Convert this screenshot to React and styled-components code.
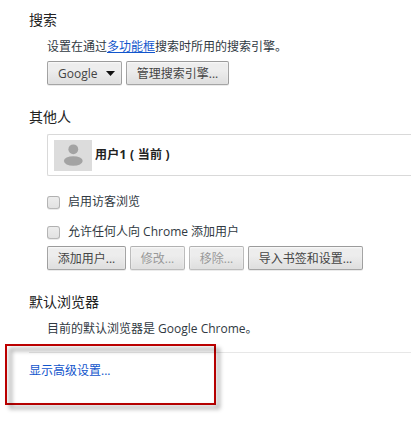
import React from 'react'
import styled, { createGlobalStyle } from 'styled-components'

const GlobalStyle = createGlobalStyle`
    html, body {
        margin: 0;
        padding: 0;
        background: #fff;
        overflow: hidden;
    }
    body {
        font-family: "Open Sans", "Noto Sans CJK SC", sans-serif;
    }
`

const App = () => {
    return (
        <Page>
            <GlobalStyle />
            <Section>
                <Heading>搜索</Heading>
                <Body $top={11}>
                    <Text>设置在通过<InlineLink>多功能框</InlineLink>搜索时所用的搜索引擎。</Text>
                    <ButtonRow $top={6}>
                        <Button $select $width={75}>
                            Google
                            <Caret viewBox="0 0 9 5"><path d="M0 0h9L4.5 5z" /></Caret>
                        </Button>
                        <Button $width={103}>管理搜索引擎...</Button>
                    </ButtonRow>
                </Body>
            </Section>
            <Section $top={23}>
                <Heading>其他人</Heading>
                <Body $top={9}>
                    <UserList>
                        <Avatar>
                            <svg width="38" height="31" viewBox="0 0 38 31">
                                <circle cx="19.3" cy="9.3" r="4.9" fill="#a3a3a3" />
                                <ellipse cx="19.3" cy="21" rx="9.4" ry="4.8" fill="#a3a3a3" />
                            </svg>
                        </Avatar>
                        <UserName>用户1 ( 当前 )</UserName>
                    </UserList>
                    <CheckRow $top={18}>
                        <Checkbox />
                        <Text>启用访客浏览</Text>
                    </CheckRow>
                    <CheckRow $top={14}>
                        <Checkbox />
                        <Text>允许任何人向 Chrome 添加用户</Text>
                    </CheckRow>
                    <ButtonRow $top={6}>
                        <Button $width={79}>添加用户...</Button>
                        <Button $width={55} disabled>修改...</Button>
                        <Button $width={55} disabled>移除...</Button>
                        <Button $width={115}>导入书签和设置...</Button>
                    </ButtonRow>
                </Body>
            </Section>
            <Section $top={23}>
                <Heading>默认浏览器</Heading>
                <Body $top={11}>
                    <Text>目前的默认浏览器是 Google Chrome。</Text>
                </Body>
            </Section>
            <Footer>
                <FooterLink>显示高级设置...</FooterLink>
            </Footer>
            <Highlight />
        </Page>
    )
}

const Page = styled.div`
    position: relative;
    width: 411px;
    height: 421px;
    padding-top: 11px;
    box-sizing: border-box;
    overflow: hidden;
    background: #fff;
    color: #303942;
`

const Section = styled.section`
    margin-top: ${props => props.$top || 0}px;
    padding-left: 29px;
`

const Heading = styled.h3`
    margin: 0;
    height: 17px;
    font-size: 14px;
    font-weight: 400;
    line-height: 17px;
    color: #222;
`

const Body = styled.div`
    margin-top: ${props => props.$top}px;
    padding-left: 18px;
`

const Text = styled.div`
    height: 16px;
    font-size: 12px;
    line-height: 16px;
    color: #303942;
    white-space: nowrap;
`

const InlineLink = styled.span`
    color: #15c;
    text-decoration: underline;
`

const ButtonRow = styled.div`
    display: flex;
    gap: 4px;
    margin-top: ${props => props.$top}px;
`

const Button = styled.button`
    display: flex;
    align-items: center;
    justify-content: ${props => props.$select ? 'space-between' : 'center'};
    width: ${props => props.$width}px;
    height: 24px;
    margin: 0;
    padding: ${props => props.$select ? '0 6px 0 10px' : '0'};
    box-sizing: border-box;
    border: 1px solid ${props => props.disabled ? 'rgba(0, 0, 0, .2)' : 'rgba(0, 0, 0, .3)'};
    border-radius: 2px;
    background: linear-gradient(#ededed, #ededed 38%, #dedede);
    box-shadow: 0 1px 0 rgba(0, 0, 0, .08), inset 0 1px 2px rgba(255, 255, 255, .75);
    color: ${props => props.disabled ? '#999' : '#444'};
    font-family: inherit;
    font-size: 12px;
    white-space: nowrap;
`

const Caret = styled.svg`
    width: 9px;
    height: 5px;
    fill: #111;
`

const UserList = styled.div`
    display: flex;
    align-items: center;
    gap: 3px;
    height: 42px;
    padding-left: 6px;
    box-sizing: border-box;
    border: 1px solid #d9d9d9;
    border-right: 0;
    border-radius: 2px 0 0 2px;
`

const Avatar = styled.div`
    width: 38px;
    height: 31px;
    background: #dcdcdc;
`

const UserName = styled.div`
    margin-top: -2px;
    font-size: 12px;
    font-weight: 700;
    letter-spacing: .25px;
    color: #222;
    white-space: pre;
`

const CheckRow = styled.div`
    display: flex;
    align-items: center;
    gap: 8px;
    margin-top: ${props => props.$top}px;
`

const Checkbox = styled.span`
    width: 13px;
    height: 13px;
    box-sizing: border-box;
    border: 1px solid rgba(0, 0, 0, .22);
    border-radius: 3px;
    background: linear-gradient(#ededed, #e2e2e2);
    box-shadow: 0 1px 0 rgba(0, 0, 0, .08);
`

const Footer = styled.div`
    margin: 15px 0 0 29px;
    padding-top: 8px;
    border-top: 1px solid #e7e7e7;
    line-height: 16px;
`

const FooterLink = styled.span`
    font-size: 12px;
    color: #15c;
`

const Highlight = styled.div`
    position: absolute;
    left: 5px;
    top: 344px;
    width: 211px;
    height: 61px;
    box-sizing: border-box;
    border: 2px solid #c00000;

    &::before {
        content: '';
        position: absolute;
        inset: -2px;
        border: 3px solid rgba(0, 0, 0, .32);
        transform: translate(4px, 4px);
        filter: blur(2px);
    }
`

export default App
